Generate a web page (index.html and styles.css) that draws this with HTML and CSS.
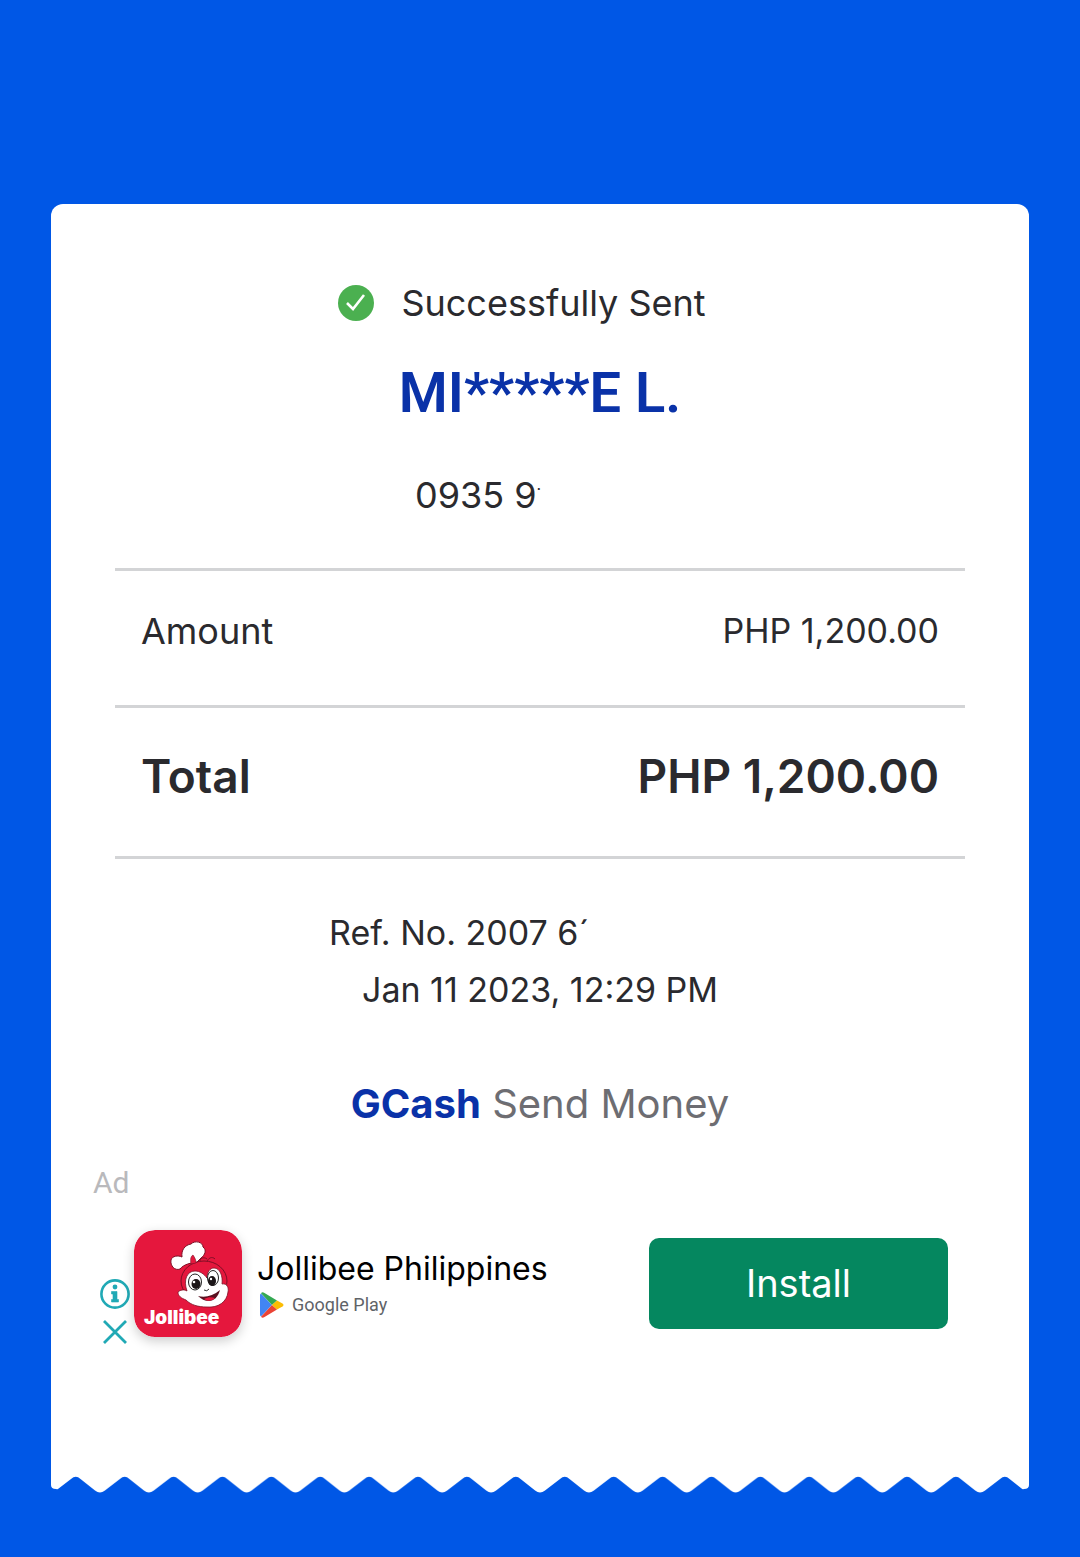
FILE: index.html
```html
<!DOCTYPE html>
<html lang="en">
  <head>
    <meta charset="utf-8">
    <meta name="viewport" content="width=device-width, initial-scale=1">
    <title>GCash Send Money</title>
    <link rel="stylesheet" href="styles.css">
  </head>

  <body>
    <main class="receipt">
      <div class="paper">
        <div class="status">
          <svg class="check" viewBox="0 0 36 36" aria-hidden="true">
            <circle cx="18" cy="18" r="18" fill="#4bb050" />
            <path d="M9 18l6 6 11-14" fill="none" stroke="#fff" stroke-width="2.6" />
          </svg>
          <span>Successfully Sent</span>
        </div>
        <h1 class="name">MI*****E L.</h1>
        <p class="phone">0935 9<span class="cut">·</span></p>

        <dl class="summary">
          <div class="row">
            <dt>Amount</dt>
            <dd>PHP 1,200.00</dd>
          </div>
          <div class="row total">
            <dt>Total</dt>
            <dd>PHP 1,200.00</dd>
          </div>
        </dl>

        <p class="ref">Ref. No. 2007 6´</p>
        <p class="date">Jan 11 2023, 12:29 PM</p>
        <p class="service"><strong>GCash</strong> <span>Send Money</span></p>

        <section class="ad">
          <p class="ad-label">Ad</p>
          <div class="ad-body">
            <div class="ad-controls">
              <button class="ad-btn" aria-label="Ad information">
                <svg viewBox="0 0 30 30">
                  <circle cx="15" cy="15" r="13.6" fill="none" stroke="#20a9b5" stroke-width="2.6" />
                  <circle cx="15" cy="8" r="2.4" fill="#20a9b5" />
                  <path d="M11.500 12.500h5.500v8h1.500V23h-7v-2.500H13V15h-1.500z" fill="#20a9b5" stroke="#20a9b5" stroke-width=".6" />
                </svg>
              </button>
              <button class="ad-btn" aria-label="Close ad">
                <svg viewBox="0 0 30 30">
                  <path d="M4 4l22 22M26 4L4 26" stroke="#20a9b5" stroke-width="2.8" />
                </svg>
              </button>
            </div>
            <svg class="app-icon" viewBox="0 0 108 107" role="img" aria-label="Jollibee">
              <rect width="108" height="107" rx="21" fill="#e5173d" />
              <!-- head -->
              <path d="M66 33c-1-4 3-7 7-4M73 32c1-4 5-6 8-3" fill="none" stroke="#7d1026" stroke-width="1" />
              <ellipse cx="70" cy="51" rx="23" ry="20" fill="#e5173d" stroke="#7d1026" stroke-width="1" />
              <!-- face -->
              <path d="M53 61C49 50 53 41 61 41c5 0 9 3 12 7 0-6 3-10 7-10 6 0 9 8 8 16 5-1 7 4 6 8-1 10-10 16-21 15-9 0-16-2-21-7-5-2-8-4-8-8 2-2 6-3 9-1z" fill="#fff" stroke="#7d1026" stroke-width=".8" />
              <!-- eyes -->
              <ellipse cx="61" cy="52" rx="6.500" ry="8" fill="#fff" stroke="#222" stroke-width="1" />
              <ellipse cx="79" cy="48" rx="5.500" ry="7.500" fill="#fff" stroke="#222" stroke-width="1" />
              <ellipse cx="62" cy="54" rx="4.500" ry="5" fill="#1c1618" />
              <ellipse cx="78" cy="51" rx="4" ry="5" fill="#1c1618" />
              <circle cx="60" cy="52" r="1.300" fill="#fff" />
              <circle cx="77" cy="49" r="1.200" fill="#fff" />
              <!-- nose and mouth -->
              <path d="M70 60q3 2 5-1" fill="none" stroke="#333" stroke-width="1" />
              <path d="M64 66c7 2 15 0 22-6-2 7-6 11-11 11-4 0-8-2-11-5z" fill="#5b1120" />
              <path d="M70 69c4-2 7-2 11-1-3 3-7 4-11 1z" fill="#e5173d" />
              <!-- hat -->
              <path d="M46 39C41 41 36 36 37 30C38 26 44 25 48 27C47 20 51 15 57 14C61 10 69 12 69 17C73 20 71 25 67 28L63 32C57 33 50 34 46 39z" fill="#fff" stroke="#7d1026" stroke-width="1" />
              <path d="M57 34c-1-5 0-8 2-9 2 3 3 5 3 8z" fill="#e5173d" stroke="#7d1026" stroke-width=".6" />
              <text class="app-logo" x="10" y="94">Jollibee</text>
            </svg>
            <div class="app">
              <p class="app-name">Jollibee Philippines</p>
              <p class="store">
                <svg class="play" viewBox="0 0 24 26" aria-hidden="true">
                  <path d="M1 1.500L12 13 1 24.500C0 24 0 23 0 22V4c0-1 0-2 1-2.500z" fill="#4285f4" />
                  <path d="M1 1.200C2 0 3 0 4.500 1L17 8.500 12 13z" fill="#34a853" />
                  <path d="M1 24.800c1 1.200 2 1.200 3.500.2L17 17.500 12 13z" fill="#ea4335" />
                  <path d="M17 8.500l5.500 3q2 1.500 0 3l-5.500 3L12 13z" fill="#fbbc04" />
                </svg>
                <span>Google Play</span>
              </p>
            </div>
            <button class="install">Install</button>
          </div>
        </section>
      </div>
      <!-- torn bottom edge -->
      <svg class="edge" viewBox="0 0 978 18" preserveAspectRatio="none" aria-hidden="true">
        <defs>
          <pattern id="tooth" x="0" y="0" width="48.900" height="18" patternUnits="userSpaceOnUse">
            <path d="M0 0H48.900V17.500Q46.500 17.500 44 15.500L29.500 4Q24.800 -.3 20 4L5 15.500Q2.500 17.500 0 17.500z" fill="#fff" />
          </pattern>
        </defs>
        <path d="M0 0H978V10Q978 14 973 14L960 18H18L5 14Q0 14 0 10z" fill="url(#tooth)" />
      </svg>
    </main>
  </body>
</html>
```

FILE: styles.css
```css
* {
  box-sizing: border-box;
}
body {
  margin: 0;
  min-height: 100vh;
  padding: 204px 51px 60px;
  background-color: #0057e6;
  color: #2a2a2e;
  font-family: Inter, "Liberation Sans", sans-serif;
  font-size: 36px;
  line-height: 48px;
}
h1,
p,
dl,
dd {
  margin: 0;
}
button {
  border: 0;
  padding: 0;
  font-family: inherit;
  cursor: pointer;
}
svg {
  display: block;
}
.paper {
  padding: 75px 64px 128px;
  background-color: #fff;
  border-radius: 12px 12px 0 0;
}
.edge {
  width: 100%;
  height: 18px;
}

.status {
  display: flex;
  justify-content: center;
  align-items: center;
  gap: 27px;
  padding-right: 36px;
}
.check {
  width: 36px;
  height: 36px;
}
.name {
  margin-top: 30px;
  font-family: Roboto, sans-serif;
  font-size: 56px;
  line-height: 72px;
  font-weight: 600;
  text-align: center;
  color: #0a32a8;
}
.phone {
  width: 250px;
  margin: 42px auto 49px;
}
.cut {
  font-size: 16px;
  line-height: 16px;
  vertical-align: super;
}

.summary {
  border-top: 3px solid #d3d4d6;
}
.row {
  display: flex;
  justify-content: space-between;
  padding: 36px 26px 50px;
  border-bottom: 3px solid #d3d4d6;
}
.row dd {
  font-size: 34px;
}
.total {
  padding: 38px 26px 50px;
  line-height: 60px;
  font-weight: 600;
}
.total dt,
.total dd {
  font-size: 46px;
}

.ref {
  width: 422px;
  margin: 50px auto 9px;
  font-size: 34px;
}
.date {
  font-size: 34px;
  text-align: center;
}
.service {
  margin-top: 66px;
  font-size: 40px;
  text-align: center;
  color: #6d6d72;
}
.service strong {
  font-weight: 700;
  color: #0a32a8;
}

.ad {
  margin: 35px -47px 0 -22px;
  padding-right: 64px;
}
.ad-label {
  font-family: Roboto, sans-serif;
  font-size: 30px;
  line-height: 40px;
  color: #b9b9bc;
}
.ad-body {
  display: flex;
  align-items: center;
  margin-top: 16px;
  padding-left: 7px;
}
.ad-controls {
  display: flex;
  flex-direction: column;
  gap: 8px;
  padding-top: 60px;
}
.ad-btn {
  width: 30px;
  height: 30px;
  background: none;
}
.app-icon {
  flex: none;
  width: 108px;
  height: 107px;
  margin: 0 15px 0 4px;
  border-radius: 21px;
  box-shadow: 0 4px 12px rgba(0, 0, 0, 0.2);
}
.app-logo {
  font-size: 19px;
  font-weight: 900;
  fill: #fff;
}
.app {
  flex: 1;
}
.app-name {
  font-size: 32px;
  line-height: 44px;
  color: #000;
}
.store {
  display: flex;
  align-items: center;
  gap: 8px;
  padding-left: 3px;
  font-family: Roboto, sans-serif;
  font-size: 18px;
  line-height: 28px;
  color: #5f6368;
}
.play {
  width: 24px;
  height: 26px;
}
.install {
  flex: none;
  width: 299px;
  height: 91px;
  border-radius: 10px;
  background-color: #05875f;
  color: #fff;
  font-size: 38px;
}
```
